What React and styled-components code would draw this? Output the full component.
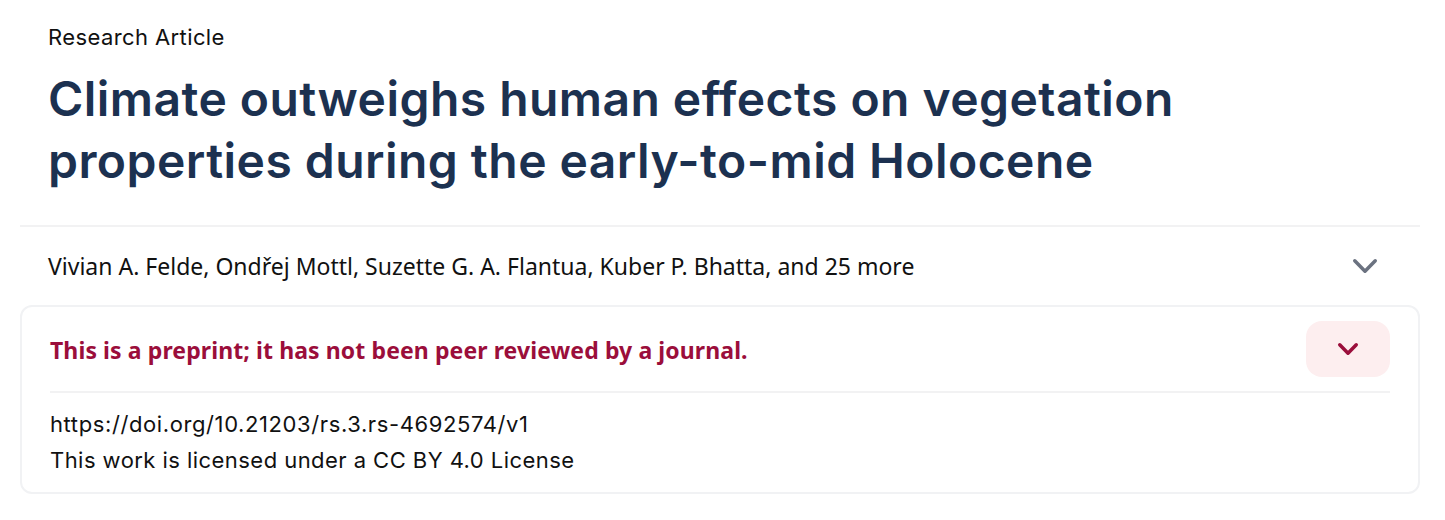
import React from "react";
import styled, { createGlobalStyle } from "styled-components";

const Global = createGlobalStyle`
  html, body { margin: 0; padding: 0; background: #ffffff; }
  body { font-family: Inter, "Liberation Sans", sans-serif; }
`;

const Page = styled.div`
  width: 1400px;
  margin-left: 20px;
  padding-top: 22px;
`;

const Header = styled.header`
  padding: 0 28px;
`;

const Kicker = styled.div`
  font-family: Inter, sans-serif;
  font-size: 22px;
  line-height: 30px;
  color: #111111;
  letter-spacing: 0.4px;
`;

const Title = styled.h1`
  margin: 16px 0 0;
  font-family: Inter, sans-serif;
  font-weight: 600;
  font-size: 48px;
  line-height: 62px;
  color: #1c3150;
  letter-spacing: 0.45px;
  max-width: 1200px;
`;

const Divider = styled.hr`
  border: none;
  height: 2px;
  background: #f2f2f3;
  margin: ${(p) => p.$margin || "0"};
`;

const AuthorsRow = styled.div`
  height: 78px;
  display: flex;
  align-items: center;
  justify-content: space-between;
  padding: 0 42px 0 28px;
`;

const Authors = styled.div`
  font-family: "Noto Sans", "Open Sans", sans-serif;
  font-size: 23px;
  color: #111111;
`;

const Chevron = ({ w, h, color, sw = 3.5 }) => (
  <svg width={w} height={h} viewBox={`0 0 ${w} ${h}`} fill="none">
    <polyline
      points={`${sw / 2 + 1},${sw / 2 + 1} ${w / 2},${h - sw / 2 - 1} ${w - sw / 2 - 1},${sw / 2 + 1}`}
      stroke={color}
      strokeWidth={sw}
      strokeLinecap="round"
      strokeLinejoin="round"
    />
  </svg>
);

const Card = styled.section`
  border: 2px solid #f1f2f4;
  border-radius: 12px;
  padding: 14px 28px 14px;
`;

const CardHead = styled.div`
  display: flex;
  align-items: center;
  justify-content: space-between;
  padding-bottom: 14px;
`;

const Notice = styled.div`
  font-family: "Noto Sans", "Open Sans", sans-serif;
  font-weight: 700;
  font-size: 23px;
  letter-spacing: 0.1px;
  color: #9b0e3b;
  padding-top: 2px;
`;

const ToggleButton = styled.button`
  width: 84px;
  height: 56px;
  border: none;
  border-radius: 16px;
  background: #fdeeef;
  display: flex;
  align-items: center;
  justify-content: center;
  padding: 0;
  cursor: pointer;
`;

const Meta = styled.div`
  padding-top: 13px;
`;

const MetaLine = styled.div`
  font-family: Inter, sans-serif;
  font-size: 22px;
  line-height: 36px;
  color: #111111;
  letter-spacing: ${(p) => p.$ls || "0.5px"};
`;

export default function App() {
  return (
    <>
      <Global />
      <Page>
        <Header>
          <Kicker>Research Article</Kicker>
          <Title>
            Climate outweighs human effects on vegetation properties during the
            early-to-mid Holocene
          </Title>
        </Header>
        <Divider $margin="33px 0 0" />
        <AuthorsRow>
          <Authors>
            Vivian A. Felde, Ondřej Mottl, Suzette G. A. Flantua, Kuber P.
            Bhatta, and 25 more
          </Authors>
          <Chevron w={26} h={16} color="#6b7280" />
        </AuthorsRow>
        <Card>
          <CardHead>
            <Notice>This is a preprint; it has not been peer reviewed by a journal.</Notice>
            <ToggleButton aria-label="Expand">
              <Chevron w={22} h={14} color="#9b0e3b" />
            </ToggleButton>
          </CardHead>
          <Divider />
          <Meta>
            <MetaLine $ls="0.6px">https://doi.org/10.21203/rs.3.rs-4692574/v1</MetaLine>
            <MetaLine $ls="0.45px">This work is licensed under a CC BY 4.0 License</MetaLine>
          </Meta>
        </Card>
      </Page>
    </>
  );
}
